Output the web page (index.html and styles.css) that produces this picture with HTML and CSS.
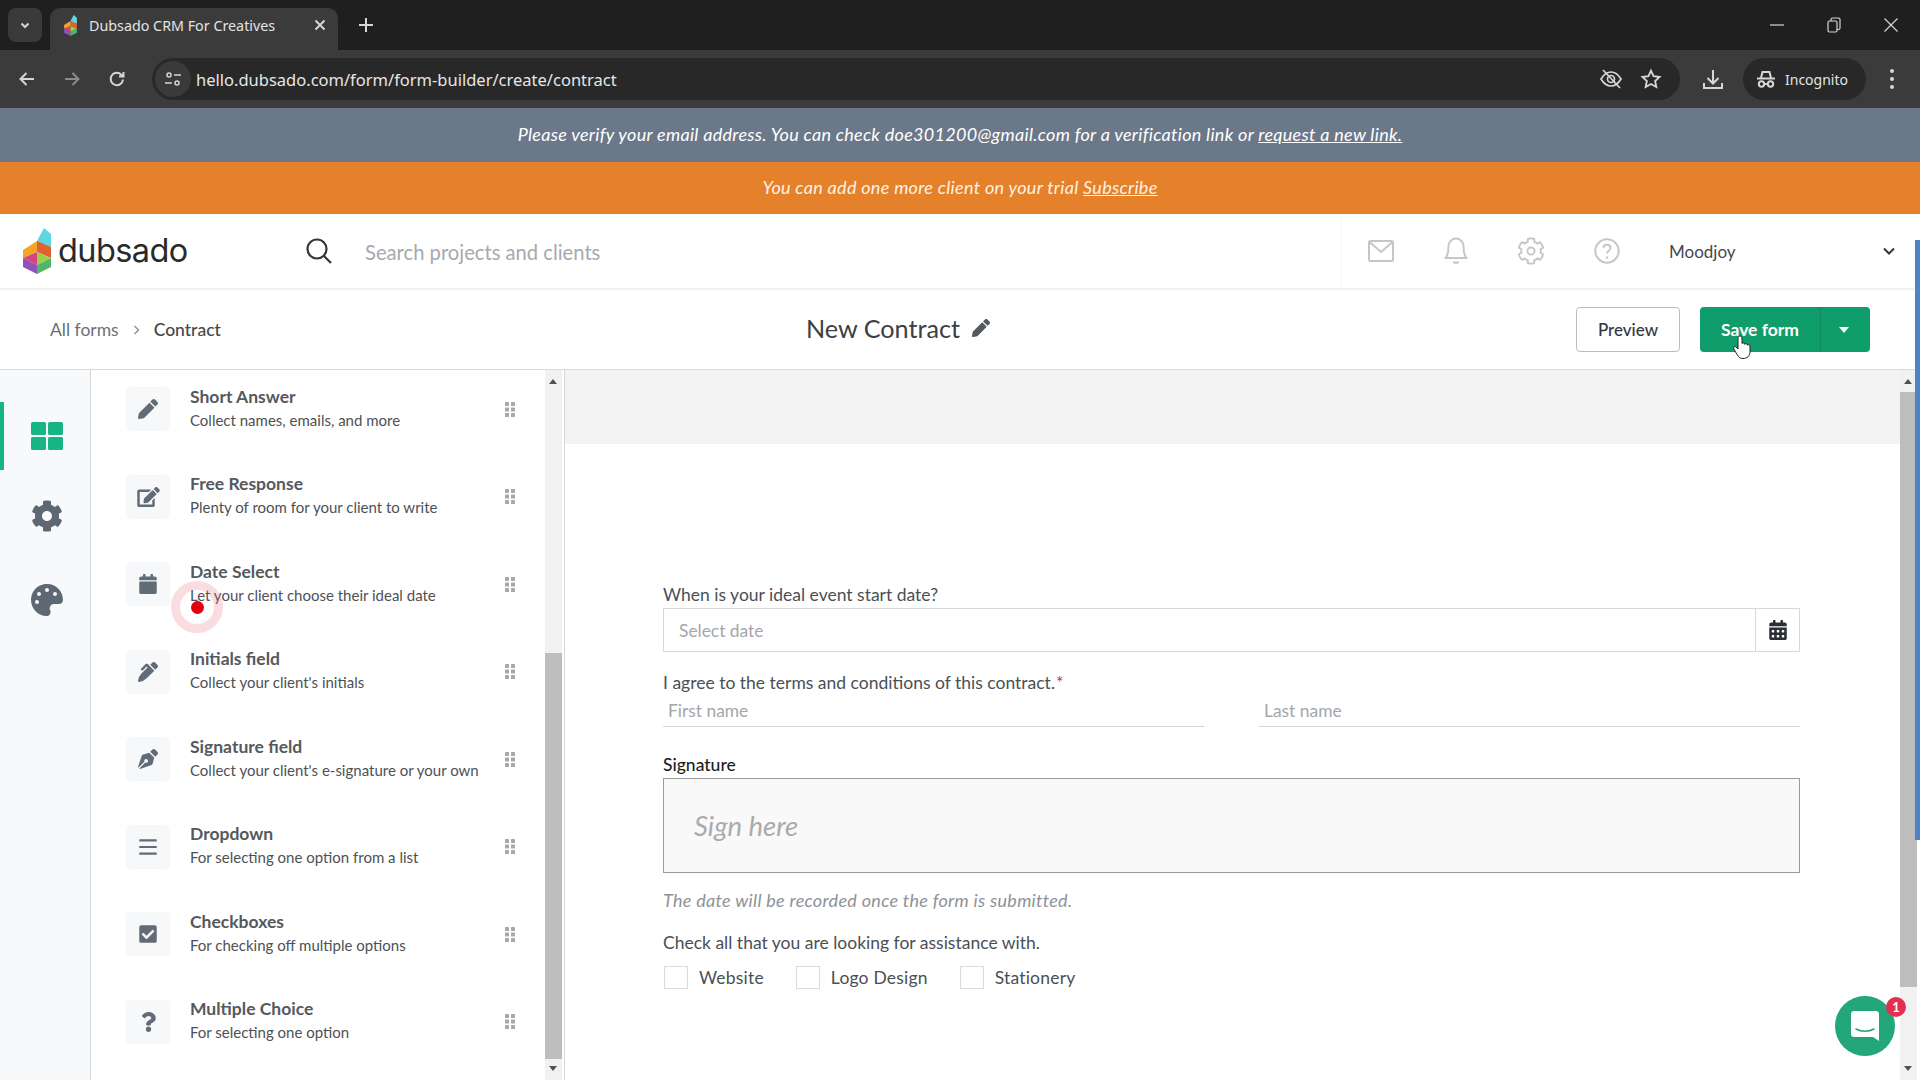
FILE: index.html
```html
<!DOCTYPE html>
<html lang="en">
<head>
    <meta charset="UTF-8">
    <title>Dubsado CRM For Creatives</title>
    <link rel="stylesheet" href="styles.css">
</head>
<body>

    <!-- ICONS -->
    <svg class="sprite" xmlns="http://www.w3.org/2000/svg">
        <symbol id="i-pencil" viewBox="0 0 512 512"><path d="M497.9 142.1l-46.1 46.1c-4.7 4.7-12.3 4.7-17 0l-111-111c-4.7-4.7-4.7-12.3 0-17l46.1-46.1c18.7-18.7 49.1-18.7 67.9 0l60.1 60.1c18.8 18.7 18.8 49.1 0 67.9zM284.2 99.8L21.6 362.4.4 483.9c-2.9 16.4 11.4 30.6 27.8 27.8l121.5-21.3 262.6-262.6c4.7-4.7 4.7-12.3 0-17l-111-111c-4.8-4.7-12.4-4.7-17.1 0z"/></symbol>
        <symbol id="i-edit" viewBox="0 0 576 512"><path d="M402.6 83.2l90.2 90.2c3.8 3.8 3.8 10 0 13.8L274.4 405.6l-92.8 10.3c-12.4 1.4-22.9-9.1-21.5-21.5l10.3-92.8L388.8 83.2c3.8-3.8 10-3.8 13.8 0zm162-22.9l-48.8-48.8c-15.2-15.2-39.9-15.2-55.2 0l-35.4 35.4c-3.8 3.8-3.8 10 0 13.8l90.2 90.2c3.8 3.8 10 3.8 13.8 0l35.4-35.4c15.2-15.3 15.2-40 0-55.2zM384 346.2V448H64V128h229.8c3.2 0 6.2-1.3 8.5-3.5l40-40c7.6-7.6 2.2-20.5-8.5-20.5H48C21.5 64 0 85.5 0 112v352c0 26.5 21.5 48 48 48h352c26.5 0 48-21.5 48-48V306.2c0-10.7-12.9-16-20.5-8.5l-40 40c-2.2 2.3-3.5 5.3-3.5 8.5z"/></symbol>
        <symbol id="i-calendar" viewBox="0 0 448 512"><path d="M12 192h424c6.6 0 12 5.4 12 12v260c0 26.5-21.5 48-48 48H48c-26.5 0-48-21.5-48-48V204c0-6.6 5.4-12 12-12zm436-44v-36c0-26.5-21.5-48-48-48h-48V12c0-6.6-5.4-12-12-12h-40c-6.6 0-12 5.4-12 12v52H160V12c0-6.6-5.4-12-12-12h-40c-6.6 0-12 5.4-12 12v52H48C21.5 64 0 85.5 0 112v36c0 6.6 5.4 12 12 12h424c6.6 0 12-5.4 12-12z"/></symbol>
        <symbol id="i-pen" viewBox="0 0 512 512"><path d="M497.94 74.17l-60.11-60.11c-18.75-18.75-49.16-18.75-67.91 0l-56.55 56.55 128.02 128.02 56.55-56.55c18.75-18.75 18.75-49.15 0-67.91zm-246.8-20.53c-15.62-15.62-40.94-15.62-56.56 0L75.8 172.43c-6.25 6.25-6.25 16.38 0 22.62l22.63 22.63c6.25 6.25 16.38 6.25 22.63 0l101.82-101.82 22.63 22.62L93.95 290.03A327.038 327.038 0 0 0 .17 485.11l-.03.23c-1.7 15.28 11.21 28.2 26.49 26.51a327.02 327.02 0 0 0 195.34-93.8l196.79-196.79-82.77-82.77-84.85-84.85z"/></symbol>
        <symbol id="i-nib" viewBox="0 0 512 512"><path d="M136.6 138.79a64.003 64.003 0 0 0-43.31 41.35L0 460l14.69 14.69L164.8 324.58c-2.99-6.26-4.8-13.18-4.8-20.58 0-26.51 21.49-48 48-48s48 21.49 48 48-21.49 48-48 48c-7.4 0-14.32-1.81-20.58-4.8L37.31 497.31 52 512l279.86-93.29a64.003 64.003 0 0 0 41.35-43.31L416 224 288 96l-151.4 42.79zm361.34-64.62l-60.11-60.11c-18.75-18.75-49.16-18.75-67.91 0l-56.55 56.55 128.02 128.02 56.55-56.55c18.75-18.75 18.75-49.15 0-67.91z"/></symbol>
        <symbol id="i-bars" viewBox="0 0 448 512"><rect x="0" y="60" width="448" height="56" rx="10"/><rect x="0" y="228" width="448" height="56" rx="10"/><rect x="0" y="396" width="448" height="56" rx="10"/></symbol>
        <symbol id="i-check" viewBox="0 0 448 512"><path d="M400 480H48c-26.51 0-48-21.49-48-48V80c0-26.51 21.49-48 48-48h352c26.51 0 48 21.49 48 48v352c0 26.51-21.49 48-48 48zm-204.686-98.059l184-184c6.248-6.248 6.248-16.379 0-22.627l-22.627-22.627c-6.248-6.248-16.379-6.249-22.628 0L184 302.745l-70.059-70.059c-6.248-6.248-16.379-6.248-22.628 0l-22.627 22.627c-6.248 6.248-6.248 16.379 0 22.627l104 104c6.249 6.25 16.379 6.25 22.628.001z"/></symbol>
        <symbol id="i-question" viewBox="0 0 384 512"><path d="M202.021 0C122.202 0 70.503 32.703 29.914 91.026c-7.363 10.58-5.093 25.086 5.178 32.874l43.138 32.709c10.373 7.865 25.132 6.026 33.253-4.148 25.049-31.381 43.63-49.449 82.757-49.449 30.764 0 68.816 19.799 68.816 49.631 0 22.552-18.617 34.134-48.993 51.164-35.423 19.86-82.299 44.576-82.299 106.405V320c0 13.255 10.745 24 24 24h72.471c13.255 0 24-10.745 24-24v-5.773c0-42.86 125.268-44.645 125.268-160.627C377.504 66.256 286.902 0 202.021 0zM192 373.459c-38.196 0-69.271 31.075-69.271 69.271 0 38.195 31.075 69.27 69.271 69.27s69.271-31.075 69.271-69.271-31.075-69.27-69.271-69.27z"/></symbol>
        <symbol id="i-grip" viewBox="0 0 10 15"><rect x="0" y="0" width="4" height="4" rx=".6"/><rect x="6" y="0" width="4" height="4" rx=".6"/><rect x="0" y="5.5" width="4" height="4" rx=".6"/><rect x="6" y="5.5" width="4" height="4" rx=".6"/><rect x="0" y="11" width="4" height="4" rx=".6"/><rect x="6" y="11" width="4" height="4" rx=".6"/></symbol>
        <symbol id="i-logo" viewBox="0 0 28 46">
            <polygon points="21,0 28,6 28,19 19,16 14,13" fill="#5fd6e0"/>
            <polygon points="14,13 28,19 28,30 14,24" fill="#e2622f"/>
            <polygon points="14,13 14,24 0,30 0,22" fill="#f4a62a"/>
            <polygon points="0,30 14,24 14,37" fill="#d6457e"/>
            <polygon points="0,30 14,37 14,46 0,39" fill="#8e52b8"/>
            <polygon points="14,24 28,30 14,37" fill="#9fce4a"/>
            <polygon points="14,37 28,30 28,39 14,46" fill="#52b56b"/>
        </symbol>
    </svg>

    <!-- BROWSER -->
    <div class="tabstrip">
        <div class="tab-list-btn">
            <svg width="12" height="12" viewBox="0 0 12 12" class="line"><path d="M2.5 4.5L6 8l3.5-3.5"/></svg>
        </div>
        <div class="tab">
            <svg class="favicon" width="13" height="21"><use href="#i-logo"/></svg>
            <span class="tab-title">Dubsado CRM For Creatives</span>
            <svg width="12" height="12" viewBox="0 0 12 12" class="line"><path d="M1.5 1.5l9 9M10.5 1.5l-9 9"/></svg>
        </div>
        <svg class="new-tab line" width="14" height="14" viewBox="0 0 14 14"><path d="M7 0v14M0 7h14"/></svg>
        <div class="win-btns">
            <svg width="14" height="14" viewBox="0 0 14 14" class="thin"><path d="M0 7h14"/></svg>
            <svg width="14" height="16" viewBox="0 0 14 16" class="thin"><rect x="1" y="4" width="9" height="11" rx="1.5"/><path d="M4 4V2.5C4 1.7 4.7 1 5.5 1h6c.9 0 1.5.7 1.5 1.5V11c0 .8-.6 1.5-1.5 1.5H10"/></svg>
            <svg width="14" height="14" viewBox="0 0 14 14" class="thin"><path d="M.5.5l13 13M13.5.5l-13 13"/></svg>
        </div>
    </div>

    <div class="toolbar">
        <svg class="line" width="18" height="18" viewBox="0 0 18 18"><path d="M16 9H3M8.5 3L2.500 9l6 6"/></svg>
        <svg class="line dim" width="18" height="18" viewBox="0 0 18 18"><path d="M2 9h13M9.5 3l6 6-6 6"/></svg>
        <svg class="line" width="18" height="18" viewBox="0 0 18 18"><path d="M15 9.500A6.200 6.200 0 1 1 13.200 4.600L15.500 6.500M15.500 2v4.500H11"/></svg>
        <div class="omnibox">
            <div class="site-btn">
                <svg width="18" height="18" viewBox="0 0 18 18" class="line"><circle cx="5" cy="5" r="2"/><path d="M10 5h7M1 13h7"/><circle cx="13" cy="13" r="2"/></svg>
            </div>
            <span class="url">hello.dubsado.com/form/form-builder/create/contract</span>
            <svg class="omni-eye line" width="24" height="24" viewBox="0 0 24 24"><path d="M2 12c3-5 6.500-7 10-7s7 2 10 7c-3 5-6.500 7-10 7s-7-2-10-7z"/><circle cx="12" cy="12" r="3.500"/><path d="M4 3l17 18"/></svg>
            <svg class="line" width="22" height="22" viewBox="0 0 24 24"><path d="M12 3l2.800 6 6.500.8-4.800 4.400 1.300 6.500L12 17.400l-5.800 3.300 1.300-6.500L2.700 9.800 9.200 9z"/></svg>
        </div>
        <svg class="line" width="24" height="24" viewBox="0 0 24 24"><path d="M12 3v13M6.500 11l5.500 5.500 5.500-5.500M3 16v5h18v-5"/></svg>
        <div class="incognito">
            <svg width="20" height="20" viewBox="0 0 20 20" class="line"><path d="M1 9.500h18M5 9l1.500-6h7L15 9"/><circle cx="5.500" cy="15" r="2.700"/><circle cx="14.500" cy="15" r="2.700"/><path d="M8.200 15h3.600"/></svg>
            <span>Incognito</span>
        </div>
        <div class="kebab"><i></i><i></i><i></i></div>
    </div>

    <!-- TEMPLATE -->
    <div class="verify">
        <em>Please verify your email address. You can check doe301200@gmail.com for a verification link or <a>request a new link.</a></em>
    </div>
    <div class="trial">
        <em>You can add one more client on your trial <a>Subscribe</a></em>
    </div>

    <header class="topbar">
        <div class="brand">
            <svg width="28" height="46"><use href="#i-logo"/></svg>
            <span class="brand-name">dubsado</span>
        </div>
        <div class="search">
            <svg width="28" height="28" viewBox="0 0 28 28" class="search-icon"><circle cx="12" cy="12" r="9.500"/><path d="M19 19l7 7"/></svg>
            <span>Search projects and clients</span>
        </div>
        <div class="top-icons">
            <svg width="26" height="22" viewBox="0 0 26 22"><rect x="1" y="1" width="24" height="20" rx="1.500"/><path d="M1.500 2L13 12 24.500 2"/></svg>
            <svg width="24" height="28" viewBox="0 0 24 28"><path d="M12 1.500c-4.500 0-7.500 3.500-7.500 8 0 7-1 9-3 11.500h21c-2-2.500-3-4.500-3-11.500 0-4.500-3-8-7.500-8zM9.500 24.500c1 2 4 2 5 0"/></svg>
            <svg width="26" height="28" viewBox="0 0 512 512"><path stroke-width="38" d="M487.4 315.700l-42.600-24.600c4.300-23.200 4.300-47 0-70.200l42.600-24.600c4.900-2.800 7.100-8.600 5.500-14-11.100-35.600-30-67.800-54.700-94.600-3.800-4.100-10-5.100-14.800-2.300L380.800 110c-17.900-15.400-38.500-27.300-60.800-35.100V25.800c0-5.600-3.900-10.500-9.400-11.700-36.700-8.200-74.300-7.800-109.200 0-5.500 1.200-9.400 6.100-9.400 11.700V75c-22.200 7.900-42.800 19.800-60.800 35.100L88.700 85.500c-4.900-2.800-11-1.900-14.800 2.300-24.700 26.700-43.600 58.900-54.700 94.600-1.700 5.400.6 11.200 5.500 14L67.300 221c-4.300 23.200-4.300 47 0 70.200l-42.600 24.600c-4.900 2.800-7.100 8.600-5.500 14 11.100 35.600 30 67.800 54.700 94.600 3.800 4.100 10 5.100 14.800 2.300l42.600-24.600c17.900 15.400 38.500 27.300 60.800 35.100v49.200c0 5.600 3.900 10.500 9.400 11.700 36.700 8.200 74.300 7.800 109.200 0 5.500-1.200 9.400-6.100 9.400-11.700v-49.200c22.200-7.900 42.800-19.800 60.800-35.100l42.600 24.600c4.900 2.800 11 1.900 14.800-2.300 24.700-26.700 43.600-58.900 54.700-94.600 1.500-5.500-.7-11.300-5.600-14.100z"/><circle stroke-width="38" cx="256" cy="256" r="70"/></svg>
            <svg width="26" height="26" viewBox="0 0 26 26"><circle cx="13" cy="13" r="11.700"/><path d="M9.500 10c0-2 1.500-3.300 3.500-3.300s3.500 1.300 3.500 3.200c0 2.800-3.500 2.800-3.500 5.600"/><circle class="dot" cx="13" cy="19.500" r=".6"/></svg>
        </div>
        <div class="account">
            <span>Moodjoy</span>
            <svg width="12" height="8" viewBox="0 0 12 8"><path d="M1 1.500l5 5 5-5"/></svg>
        </div>
    </header>

    <div class="subbar">
        <nav class="crumbs">
            <a>All forms</a>
            <svg width="7" height="10" viewBox="0 0 7 10"><path d="M1.500 1l4 4-4 4"/></svg>
            <b>Contract</b>
        </nav>
        <div class="form-title">
            <span>New Contract</span>
            <svg width="18" height="18"><use href="#i-pencil"/></svg>
        </div>
        <div class="actions">
            <button class="btn-preview">Preview</button>
            <div class="btn-save">
                <span class="save-label">Save form</span>
                <span class="save-caret"></span>
            </div>
        </div>
    </div>

    <div class="workspace">
        <aside class="rail">
            <div class="rail-item active">
                <svg width="32" height="28" viewBox="0 0 32 28"><rect width="15" height="13" rx="1.500"/><rect x="17" width="15" height="13" rx="1.500"/><rect y="15" width="15" height="13" rx="1.500"/><rect x="17" y="15" width="15" height="13" rx="1.500"/></svg>
            </div>
            <div class="rail-item">
                <svg width="32" height="32" viewBox="0 0 512 512"><path d="M487.4 315.700l-42.600-24.600c4.300-23.200 4.300-47 0-70.200l42.600-24.600c4.900-2.800 7.100-8.600 5.500-14-11.100-35.600-30-67.800-54.700-94.600-3.800-4.100-10-5.100-14.800-2.300L380.800 110c-17.900-15.400-38.500-27.300-60.800-35.100V25.800c0-5.600-3.900-10.500-9.400-11.700-36.700-8.200-74.300-7.800-109.200 0-5.500 1.200-9.400 6.100-9.400 11.700V75c-22.200 7.900-42.800 19.800-60.800 35.100L88.700 85.500c-4.900-2.800-11-1.900-14.800 2.300-24.700 26.700-43.600 58.900-54.700 94.600-1.700 5.400.6 11.200 5.500 14L67.300 221c-4.300 23.200-4.300 47 0 70.200l-42.600 24.600c-4.900 2.800-7.100 8.600-5.500 14 11.100 35.600 30 67.800 54.700 94.600 3.800 4.100 10 5.100 14.800 2.300l42.600-24.600c17.900 15.400 38.500 27.300 60.800 35.100v49.200c0 5.600 3.900 10.500 9.400 11.700 36.700 8.200 74.300 7.800 109.200 0 5.500-1.200 9.400-6.100 9.400-11.700v-49.200c22.200-7.900 42.800-19.800 60.800-35.100l42.600 24.600c4.900 2.800 11 1.900 14.800-2.300 24.700-26.700 43.600-58.900 54.700-94.600 1.500-5.500-.7-11.300-5.600-14.100zM256 336c-44.100 0-80-35.900-80-80s35.900-80 80-80 80 35.900 80 80-35.900 80-80 80z"/></svg>
            </div>
            <div class="rail-item">
                <svg width="32" height="32" viewBox="0 0 512 512"><path d="M204.300 5C104.900 24.400 24.800 104.300 5.200 203.400c-37 187 131.700 326.400 258.800 306.700 41.200-6.400 61.400-54.600 42.500-91.700-23.100-45.400 9.900-98.400 60.900-98.400h79.700c35.800 0 64.800-29.600 64.900-65.300C511.500 97.100 368.100-26.900 204.300 5zM96 320c-17.700 0-32-14.300-32-32s14.300-32 32-32 32 14.300 32 32-14.300 32-32 32zm32-128c-17.700 0-32-14.300-32-32s14.300-32 32-32 32 14.300 32 32-14.300 32-32 32zm128-64c-17.700 0-32-14.300-32-32s14.300-32 32-32 32 14.300 32 32-14.300 32-32 32zm128 64c-17.700 0-32-14.300-32-32s14.300-32 32-32 32 14.300 32 32-14.300 32-32 32z"/></svg>
            </div>
        </aside>

        <section class="panel">
            <ul class="field-list">
                <li class="field">
                    <div class="field-icon"><svg width="20" height="20"><use href="#i-pencil"/></svg></div>
                    <div class="field-text"><h4>Short Answer</h4><p>Collect names, emails, and more</p></div>
                    <svg class="grip" width="10" height="15"><use href="#i-grip"/></svg>
                </li>
                <li class="field">
                    <div class="field-icon"><svg width="23" height="20"><use href="#i-edit"/></svg></div>
                    <div class="field-text"><h4>Free Response</h4><p>Plenty of room for your client to write</p></div>
                    <svg class="grip" width="10" height="15"><use href="#i-grip"/></svg>
                </li>
                <li class="field">
                    <div class="field-icon"><svg width="18" height="20"><use href="#i-calendar"/></svg></div>
                    <div class="field-text"><h4>Date Select</h4><p>Let your client choose their ideal date</p></div>
                    <svg class="grip" width="10" height="15"><use href="#i-grip"/></svg>
                </li>
                <li class="field">
                    <div class="field-icon"><svg width="20" height="20"><use href="#i-pen"/></svg></div>
                    <div class="field-text"><h4>Initials field</h4><p>Collect your client's initials</p></div>
                    <svg class="grip" width="10" height="15"><use href="#i-grip"/></svg>
                </li>
                <li class="field">
                    <div class="field-icon"><svg width="20" height="20"><use href="#i-nib"/></svg></div>
                    <div class="field-text"><h4>Signature field</h4><p>Collect your client's e-signature or your own</p></div>
                    <svg class="grip" width="10" height="15"><use href="#i-grip"/></svg>
                </li>
                <li class="field">
                    <div class="field-icon"><svg width="18" height="20"><use href="#i-bars"/></svg></div>
                    <div class="field-text"><h4>Dropdown</h4><p>For selecting one option from a list</p></div>
                    <svg class="grip" width="10" height="15"><use href="#i-grip"/></svg>
                </li>
                <li class="field">
                    <div class="field-icon"><svg width="18" height="20"><use href="#i-check"/></svg></div>
                    <div class="field-text"><h4>Checkboxes</h4><p>For checking off multiple options</p></div>
                    <svg class="grip" width="10" height="15"><use href="#i-grip"/></svg>
                </li>
                <li class="field">
                    <div class="field-icon"><svg width="15" height="20"><use href="#i-question"/></svg></div>
                    <div class="field-text"><h4>Multiple Choice</h4><p>For selecting one option</p></div>
                    <svg class="grip" width="10" height="15"><use href="#i-grip"/></svg>
                </li>
            </ul>
            <div class="scrollbar panel-scroll">
                <i class="arrow-up"></i>
                <div class="thumb"></div>
                <i class="arrow-down"></i>
            </div>
        </section>

        <main class="canvas">
            <div class="canvas-scroll">
                <div class="canvas-top"></div>
                <form class="contract">
                    <label class="q">When is your ideal event start date?</label>
                    <div class="date-input">
                        <span>Select date</span>
                        <div class="date-btn"><svg width="18" height="20" viewBox="0 0 448 512"><path d="M0 464c0 26.500 21.500 48 48 48h352c26.500 0 48-21.500 48-48V192H0v272zm320-196c0-6.600 5.400-12 12-12h40c6.600 0 12 5.400 12 12v40c0 6.600-5.400 12-12 12h-40c-6.600 0-12-5.400-12-12v-40zm0 128c0-6.600 5.400-12 12-12h40c6.600 0 12 5.400 12 12v40c0 6.600-5.400 12-12 12h-40c-6.600 0-12-5.400-12-12v-40zM192 268c0-6.600 5.400-12 12-12h40c6.600 0 12 5.400 12 12v40c0 6.600-5.400 12-12 12h-40c-6.600 0-12-5.400-12-12v-40zm0 128c0-6.600 5.400-12 12-12h40c6.600 0 12 5.400 12 12v40c0 6.600-5.400 12-12 12h-40c-6.600 0-12-5.400-12-12v-40zM64 268c0-6.600 5.400-12 12-12h40c6.600 0 12 5.400 12 12v40c0 6.600-5.400 12-12 12H76c-6.600 0-12-5.400-12-12v-40zm0 128c0-6.600 5.400-12 12-12h40c6.600 0 12 5.400 12 12v40c0 6.600-5.400 12-12 12H76c-6.600 0-12-5.400-12-12v-40zM400 64h-48V16c0-8.800-7.200-16-16-16h-32c-8.800 0-16 7.200-16 16v48H160V16c0-8.800-7.200-16-16-16h-32c-8.800 0-16 7.200-16 16v48H48C21.500 64 0 85.500 0 112v48h448v-48c0-26.500-21.500-48-48-48z"/></svg></div>
                    </div>
                    <label class="q q-terms">I agree to the terms and conditions of this contract.<span class="req">*</span></label>
                    <div class="names">
                        <div class="name-input">First name</div>
                        <div class="name-input">Last name</div>
                    </div>
                    <label class="q q-sign">Signature</label>
                    <div class="sign-box">Sign here</div>
                    <p class="note">The date will be recorded once the form is submitted.</p>
                    <label class="q q-check">Check all that you are looking for assistance with.</label>
                    <div class="checks">
                        <div class="check"><i></i>Website</div>
                        <div class="check"><i></i>Logo Design</div>
                        <div class="check"><i></i>Stationery</div>
                    </div>
                </form>
            </div>
            <div class="scrollbar main-scroll">
                <i class="arrow-up"></i>
                <div class="thumb"></div>
                <i class="arrow-down"></i>
            </div>
        </main>
    </div>

    <!-- OVERLAYS -->
    <div class="page-strip"></div>
    <div class="click-mark"><i></i></div>
    <svg class="hand" width="20" height="26" viewBox="0 0 20 26"><path d="M6.500 2c-1 0-1.500.8-1.500 1.700V15l-2-2c-1-1-2.500-.4-2.300.9.300 1.600 3 6.500 4.800 8.600 1 1.200 2.500 2 4.500 2 4 0 7-2.500 7-6.500v-6c0-1.600-2-1.800-2.500-.8 0-1.700-2.300-2-2.800-.8 0-1.600-2.200-2-2.700-.8V3.700C8 2.800 7.500 2 6.500 2z"/></svg>
    <div class="chat">
        <svg width="30" height="32" viewBox="0 0 30 32"><path d="M4 1h22c1.700 0 3 1.300 3 3v27l-6-4H4c-1.700 0-3-1.300-3-3V4c0-1.700 1.300-3 3-3z" fill="#fff"/><path d="M6 19c5 3 13 3 18 0" fill="none" stroke="#22a67a" stroke-width="1.500" stroke-linecap="round"/></svg>
        <span class="chat-badge">1</span>
    </div>

</body>
</html>
```

FILE: styles.css
```css
/* TEMPLATE */
* {
    box-sizing: border-box;
}

html, body {
    margin: 0;
    height: 100%;
}

body {
    width: 1920px;
    height: 1080px;
    overflow: hidden;
    display: flex;
    flex-direction: column;
    position: relative;
    font-family: "Lato", "Liberation Sans", sans-serif;
    color: #4a4f55;
    background-color: white;
}

.sprite {
    display: none;
}

h4, p, ul {
    margin: 0;
    padding: 0;
}

/* -------- browser -------- */

.line {
    fill: none;
    stroke: #d6d6d6;
    stroke-width: 2;
}

.thin {
    fill: none;
    stroke: #d6d6d6;
    stroke-width: 1.2;
}

.dim {
    stroke: #8b8b8b;
}

.tabstrip {
    height: 50px;
    flex: none;
    background-color: #1f1f1f;
    display: flex;
    align-items: flex-end;
    font-family: "Noto Sans", sans-serif;
}

.tab-list-btn {
    width: 34px;
    height: 34px;
    margin: 0 8px 8px 8px;
    border-radius: 8px;
    background-color: #3a3a3a;
    display: flex;
    align-items: center;
    justify-content: center;
}

.tab {
    width: 288px;
    height: 42px;
    background-color: #3b3b3b;
    border-radius: 10px 10px 0 0;
    display: flex;
    align-items: center;
    padding: 0 12px 8px 14px;
    color: #e3e3e3;
    font-size: 14.3px;
}

.favicon {
    flex: none;
}

.tab-title {
    margin-left: 12px;
    flex: 1;
    white-space: nowrap;
}

.new-tab {
    margin: 0 0 18px 21px;
}

.win-btns {
    margin-left: auto;
    display: flex;
    align-items: center;
    gap: 43px;
    padding-right: 22px;
    align-self: center;
}

.toolbar {
    height: 58px;
    flex: none;
    background-color: #3b3b3b;
    display: flex;
    align-items: center;
    padding-left: 18px;
    gap: 27px;
    font-family: "Noto Sans", sans-serif;
}

.omnibox {
    margin-left: -1px;
    width: 1528px;
    height: 42px;
    background-color: #282828;
    border-radius: 21px;
    display: flex;
    align-items: center;
    padding-right: 18px;
    margin-right: -6px;
}

.site-btn {
    width: 36px;
    height: 36px;
    margin-left: 3px;
    border-radius: 50%;
    background-color: #3a3a3a;
    display: flex;
    align-items: center;
    justify-content: center;
}

.site-btn .line {
    stroke-width: 1.5;
}

.url {
    margin-left: 5px;
    font-size: 16.5px;
    color: #e6e6e6;
    flex: 1;
    white-space: nowrap;
}

.omni-eye {
    margin-right: 17px;
    stroke-width: 1.7;
}

.incognito {
    width: 123px;
    height: 42px;
    margin-left: -9px;
    border-radius: 21px;
    background-color: #282828;
    display: flex;
    align-items: center;
    gap: 9px;
    padding-left: 13px;
    font-size: 14px;
    color: #e3e3e3;
}

.kebab {
    margin-left: -3px;
    display: flex;
    flex-direction: column;
    gap: 4px;
}

.kebab i {
    width: 4px;
    height: 4px;
    border-radius: 50%;
    background-color: #d6d6d6;
}

/* -------- banners -------- */

.verify {
    height: 54px;
    flex: none;
    background-color: #6b7889;
    color: white;
    font-size: 18px;
    letter-spacing: .29px;
    display: flex;
    align-items: center;
    justify-content: center;
    padding-bottom: 2px;
}

.verify a, .trial a {
    text-decoration: underline;
}

.trial {
    height: 52px;
    flex: none;
    background-color: #e4812a;
    color: #fdf1e4;
    font-size: 18px;
    letter-spacing: .3px;
    display: flex;
    align-items: center;
    justify-content: center;
    padding-bottom: 2px;
}

/* -------- header -------- */

.topbar {
    height: 76px;
    flex: none;
    display: flex;
    align-items: center;
    border-bottom: 2px solid #f1f1f1;
    background-color: white;
}

.brand {
    width: 280px;
    padding-left: 23px;
    display: flex;
    align-items: center;
    gap: 7px;
}

.brand-name {
    font-family: "Inter", sans-serif;
    font-size: 32.5px;
    color: #2a2a2a;
    letter-spacing: -.6px;
    margin-top: -2px;
}

.search {
    flex: 1;
    display: flex;
    align-items: center;
    gap: 32px;
    padding-left: 25px;
    font-size: 20.2px;
    color: #a6a9ad;
    height: 100%;
    border-right: 1px solid #f7f7f7;
}

.search span {
    margin-top: 1px;
}

.search-icon {
    fill: none;
    stroke: #33383d;
    stroke-width: 2.2;
}

.top-icons {
    display: flex;
    align-items: center;
    gap: 50px;
    margin-left: 26px;
    width: 308px;
}

.top-icons svg {
    fill: none;
    stroke: #c4c7ca;
    stroke-width: 2;
}

.top-icons .dot {
    stroke-width: 1.5;
}

.account {
    width: 251px;
    padding-right: 25px;
    display: flex;
    align-items: center;
    justify-content: space-between;
    font-size: 17px;
    color: #44484d;
    margin-left: -7px;
}

.account span {
    margin-top: 1px;
}

.account svg {
    fill: none;
    stroke: #33383d;
    stroke-width: 2;
}

/* -------- form header -------- */

.subbar {
    height: 80px;
    flex: none;
    display: grid;
    grid-template-columns: 756px auto 1fr;
    align-items: center;
    padding: 0 50px;
    border-bottom: 1px solid #d8dadc;
    background-color: white;
}

.crumbs {
    display: flex;
    align-items: center;
    gap: 14px;
    font-size: 17.5px;
    color: #6b7075;
}

.crumbs svg {
    fill: none;
    stroke: #8a8f94;
    stroke-width: 1.4;
}

.crumbs b {
    font-weight: 500;
    color: #44484d;
}

.form-title {
    display: flex;
    align-items: center;
    gap: 12px;
    font-size: 25.2px;
    color: #3c4045;
    fill: #54595f;
    margin-bottom: 3px;
}

.actions {
    display: flex;
    justify-content: flex-end;
    gap: 20px;
}

.btn-preview {
    width: 104px;
    height: 45px;
    border: 1px solid #b9bcbf;
    border-radius: 4px;
    background-color: white;
    font-family: inherit;
    font-size: 17px;
    font-weight: 500;
    color: #33383d;
}

.btn-save {
    width: 170px;
    height: 45px;
    background-color: #0f9d6b;
    border-radius: 4px;
    display: flex;
    color: white;
    font-size: 17.5px;
    font-weight: 700;
}

.save-label {
    width: 121px;
    display: flex;
    align-items: center;
    justify-content: center;
    border-right: 1px solid #0d8a5e;
}

.save-caret {
    flex: 1;
    padding-right: 4px;
    display: flex;
    align-items: center;
    justify-content: center;
}

.save-caret::after {
    content: "";
    border-top: 6px solid white;
    border-left: 5px solid transparent;
    border-right: 5px solid transparent;
}

/* -------- workspace -------- */

.workspace {
    flex: 1;
    min-height: 0;
    display: flex;
}

.rail {
    width: 91px;
    flex: none;
    background-color: #f8f9fb;
    border-right: 1px solid #d5d8db;
    padding-top: 32px;
    display: flex;
    flex-direction: column;
    gap: 7px;
}

.rail-item {
    height: 77px;
    padding-left: 3px;
    display: flex;
    align-items: center;
    justify-content: center;
    fill: #5e6774;
}

.rail-item.active {
    height: 68px;
    fill: #17b583;
    position: relative;
}

.rail-item.active::before {
    content: "";
    position: absolute;
    left: 0;
    top: 0;
    bottom: 0;
    width: 4px;
    background-color: #17b583;
}

.panel {
    width: 474px;
    flex: none;
    display: flex;
    border-right: 1px solid #d5d8db;
}

.field-list {
    flex: 1;
    list-style: none;
    padding: 17px 30px 0 35px;
    display: flex;
    flex-direction: column;
    gap: 43.5px;
}

.field {
    display: flex;
    align-items: center;
    height: 44px;
}

.field-icon {
    width: 44px;
    height: 44px;
    flex: none;
    background-color: #f7f8fa;
    border-radius: 4px;
    display: flex;
    align-items: center;
    justify-content: center;
    fill: #626b78;
}

.field-text {
    flex: 1;
    margin: -2px 0 0 20px;
}

.field-text h4 {
    font-size: 17.5px;
    line-height: 20px;
    font-weight: 700;
    color: #55595e;
}

.field-text p {
    font-size: 15px;
    line-height: 20px;
    margin-top: 3px;
    color: #4d5156;
    white-space: nowrap;
}

.grip {
    flex: none;
    fill: #a5a9ae;
}

.scrollbar {
    width: 17px;
    flex: none;
    background-color: #f1f1f1;
    position: relative;
}

.panel-scroll {
    margin-right: 2px;
}

.scrollbar .thumb {
    position: absolute;
    left: 0;
    right: 0;
    background-color: #bdbdbd;
}

.panel-scroll .thumb {
    top: 283px;
    height: 406px;
}

.main-scroll .thumb {
    top: 22px;
    height: 595px;
}

.arrow-up, .arrow-down {
    position: absolute;
    left: 4px;
    border-left: 4.5px solid transparent;
    border-right: 4.5px solid transparent;
}

.arrow-up {
    top: 9px;
    border-bottom: 5px solid #505050;
}

.arrow-down {
    bottom: 9px;
    border-top: 5px solid #505050;
}

.canvas {
    flex: 1;
    min-width: 0;
    display: flex;
    background-color: white;
}

.canvas-scroll {
    flex: 1;
    min-width: 0;
}

.main-scroll {
    margin-right: 3px;
}

.canvas-top {
    height: 74px;
    background-color: #f3f3f3;
}

.contract {
    padding: 141px 100px 0 98px;
    display: flex;
    flex-direction: column;
}

.q {
    display: block;
    font-size: 17.5px;
    line-height: 20px;
    color: #4a4f55;
}

.date-input {
    margin-top: 3px;
    height: 44px;
    border: 1px solid #d6d8da;
    display: flex;
    align-items: center;
    justify-content: space-between;
    padding-left: 15px;
    font-size: 17.4px;
    color: #a3a6aa;
}

.date-btn {
    width: 44px;
    height: 100%;
    border-left: 1px solid #d6d8da;
    display: flex;
    align-items: center;
    justify-content: center;
    fill: #2b2e33;
}

.q-terms {
    margin-top: 21px;
}

.req {
    color: #b5413a;
    margin-left: 1px;
}

.names {
    display: flex;
    justify-content: space-between;
}

.name-input {
    width: 541px;
    height: 34px;
    border-bottom: 1px solid #d2d4d6;
    padding: 7px 0 0 5px;
    font-size: 17.4px;
    color: #a3a6aa;
}

.q-sign {
    margin-top: 28px;
    font-weight: 500;
    color: #1d1f22;
}

.sign-box {
    margin-top: 3px;
    height: 95px;
    border: 1px solid #9b9b9b;
    background-color: #f9f9f9;
    display: flex;
    align-items: center;
    padding-left: 30px;
    font-size: 27.5px;
    font-style: italic;
    color: #a9abad;
}

.note {
    margin-top: 17px;
    line-height: 20px;
    font-size: 18px;
    letter-spacing: .3px;
    font-style: italic;
    color: #8e9296;
}

.q-check {
    margin-top: 23px;
}

.checks {
    margin-top: 13px;
    display: flex;
    padding-left: 1px;
    font-size: 17.5px;
    letter-spacing: .2px;
    color: #4a4f55;
}

.check {
    display: flex;
    align-items: center;
    gap: 11px;
    margin-right: 32px;
}

.check i {
    width: 24px;
    height: 23px;
    border: 1px solid #d9dbdd;
}

/* -------------------------------------- */

.page-strip {
    position: absolute;
    right: 0;
    top: 240px;
    width: 5px;
    height: 600px;
    background-color: #4c84c6;
}

.click-mark {
    position: absolute;
    left: 171px;
    top: 581px;
    width: 52px;
    height: 52px;
    border-radius: 50%;
    border: 9px solid rgba(226, 100, 120, .22);
    display: flex;
    align-items: center;
    justify-content: center;
}

.click-mark i {
    width: 13px;
    height: 13px;
    border-radius: 50%;
    background-color: #e00012;
}

.hand {
    position: absolute;
    left: 1733px;
    top: 334px;
    fill: white;
    stroke: #222;
    stroke-width: 1;
}

.chat {
    position: absolute;
    left: 1835px;
    top: 996px;
    width: 60px;
    height: 60px;
    border-radius: 50%;
    background-color: #22a67a;
    display: flex;
    align-items: center;
    justify-content: center;
}

.chat-badge {
    position: absolute;
    right: -11px;
    top: 1px;
    width: 20px;
    height: 20px;
    border-radius: 50%;
    background-color: #e2304f;
    color: white;
    font-size: 13px;
    font-weight: 700;
    display: flex;
    align-items: center;
    justify-content: center;
}
```
